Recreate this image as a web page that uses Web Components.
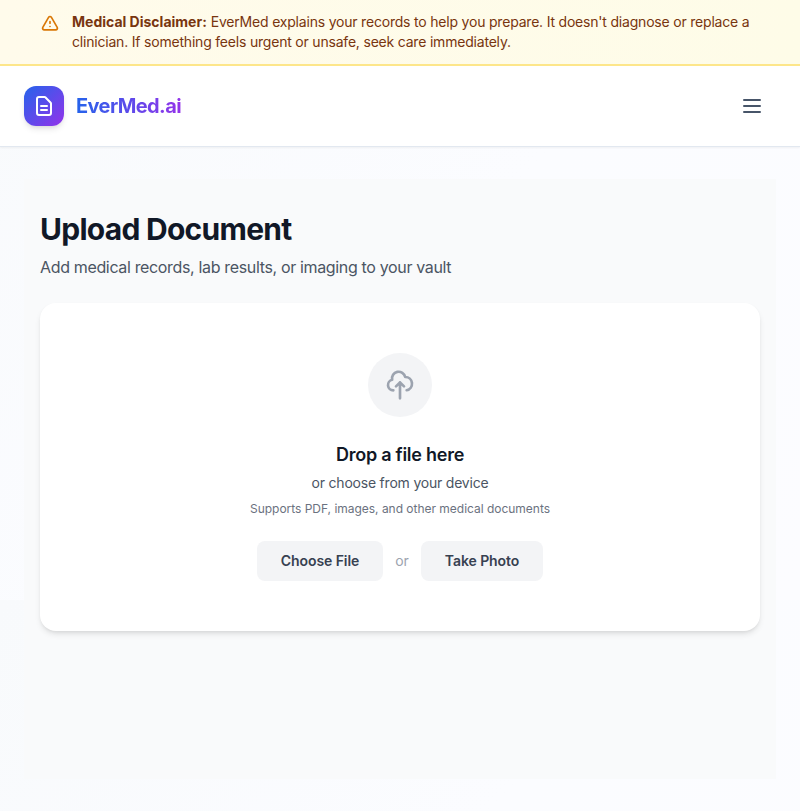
<!DOCTYPE html>
<html lang="en">
<head>
<meta charset="utf-8">
<title>EverMed.ai</title>
<style>
html { background: linear-gradient(135deg, #f8fafc 0%, #fbfcff 50%, #fcfcff 100%) 0 0 / 100% 600px; min-height: 100%; }
body { margin: 0; font-family: Inter, "Liberation Sans", sans-serif; color: #111827; overflow: hidden; }
</style>
</head>
<body>
<disclaimer-bar><strong>Medical Disclaimer:</strong> <span>EverMed explains your records to help you prepare. It doesn't diagnose or replace a clinician. If something feels urgent or unsafe, seek care immediately.</span></disclaimer-bar>
<site-header>EverMed.ai</site-header>
<upload-page>
  <span slot="title">Upload Document</span>
  <span slot="subtitle">Add medical records, lab results, or imaging to your vault</span>
  <drop-card>
    <span slot="heading">Drop a file here</span>
    <span slot="hint">or choose from your device</span>
    <span slot="formats">Supports PDF, images, and other medical documents</span>
    <soft-button slot="actions">Choose File</soft-button>
    <span slot="actions">or</span>
    <soft-button slot="actions">Take Photo</soft-button>
  </drop-card>
</upload-page>
<script>
const define = (name, html) => customElements.define(name, class extends HTMLElement {
  constructor() {
    super();
    this.attachShadow({ mode: 'open' }).innerHTML = html;
  }
});

define('disclaimer-bar', `
<style>
:host { display: flex; gap: 12px; box-sizing: border-box; height: 66px; padding: 12px 40px; background: linear-gradient(90deg, #fffbeb, #fefce8); border-bottom: 2px solid #fde68a; color: #78350f; font-size: 14px; line-height: 20px; }
svg { flex: none; width: 20px; height: 20px; margin-top: 2px; }
p { margin: 0; flex: 1; }
::slotted(strong) { font-weight: 700; }
::slotted(span) { letter-spacing: -.2px; }
</style>
<svg viewBox="0 0 24 24" fill="none" stroke="#d97706" stroke-width="2" stroke-linecap="round" stroke-linejoin="round"><path d="M12 9v2m0 4h.01m-6.938 4h13.856c1.54 0 2.502-1.667 1.732-3L13.732 4c-.77-1.333-2.694-1.333-3.464 0L3.34 16c-.77 1.333.192 3 1.732 3z"/></svg>
<p><slot></slot></p>`);

define('site-header', `
<style>
:host { display: flex; align-items: center; justify-content: space-between; padding: 16px 24px; background: #fff; border-bottom: 1px solid #e2e8f0; box-shadow: 0 1px 2px rgba(0,0,0,.05); }
.brand { display: flex; align-items: center; gap: 12px; }
.mark { display: grid; place-items: center; width: 40px; height: 40px; border-radius: 12px; background: linear-gradient(135deg, #2563eb, #9333ea); box-shadow: 0 4px 6px -1px rgba(0,0,0,.1), 0 2px 4px -2px rgba(0,0,0,.1); }
.mark svg { width: 24px; height: 24px; }
.name { font-size: 20px; line-height: 28px; font-weight: 700; letter-spacing: -.6px; background: linear-gradient(90deg, #2563eb, #9333ea); -webkit-background-clip: text; background-clip: text; color: transparent; }
button { all: unset; display: flex; padding: 12px; height: 24px; }
</style>
<div class="brand">
<div class="mark"><svg viewBox="0 0 24 24" fill="none" stroke="#fff" stroke-width="2" stroke-linecap="round" stroke-linejoin="round"><path d="M9 12h6m-6 4h6m2 5H7a2 2 0 01-2-2V5a2 2 0 012-2h5.586a1 1 0 01.707.293l5.414 5.414a1 1 0 01.293.707V19a2 2 0 01-2 2z"/></svg></div>
<span class="name"><slot></slot></span>
</div>
<button aria-label="Open menu"><svg width="24" height="24" viewBox="0 0 24 24" fill="none" stroke="#475569" stroke-width="2" stroke-linecap="round"><path d="M4 6h16M4 12h16M4 18h16"/></svg></button>`);

define('upload-page', `
<style>
:host { display: block; padding: 32px 24px; }
main { box-sizing: border-box; min-height: 600px; padding: 32px 16px; background: #f9fafb; }
h1 { margin: 0 0 8px; font-size: 30px; line-height: 36px; font-weight: 700; color: #111827; letter-spacing: -.73px; }
p { margin: 0 0 24px; font-size: 16px; line-height: 24px; color: #4b5563; letter-spacing: -.345px; }
</style>
<main><h1><slot name="title"></slot></h1><p><slot name="subtitle"></slot></p><slot></slot></main>`);

define('drop-card', `
<style>
:host { display: flex; flex-direction: column; align-items: center; box-sizing: border-box; height: 328px; padding: 50px; border-radius: 16px; background: #fff; box-shadow: 0 4px 6px -1px rgba(0,0,0,.1), 0 2px 4px -2px rgba(0,0,0,.1); text-align: center; }
.disc { display: grid; place-items: center; width: 64px; height: 64px; border-radius: 50%; background: #f3f4f6; margin-bottom: 24px; }
h3 { margin: 0 0 4px; font-size: 18px; line-height: 28px; font-weight: 600; color: #111827; letter-spacing: -.25px; }
.hint { margin: 0 0 8px; font-size: 14px; line-height: 20px; color: #4b5563; letter-spacing: -.21px; }
.formats { margin: 0; font-size: 12px; line-height: 16px; color: #6b7280; letter-spacing: -.02px; }
.actions { display: flex; align-items: center; gap: 12px; margin-top: 24px; font-size: 14px; line-height: 20px; color: #9ca3af; }
</style>
<div class="disc"><svg width="32" height="32" viewBox="0 0 24 24" fill="none" stroke="#9ca3af" stroke-width="2" stroke-linecap="round" stroke-linejoin="round"><path d="M7 16a4 4 0 01-.88-7.903A5 5 0 1115.9 6L16 6a5 5 0 011 9.9M15 13l-3-3m0 0l-3 3m3-3v12"/></svg></div>
<h3><slot name="heading"></slot></h3>
<p class="hint"><slot name="hint"></slot></p>
<p class="formats"><slot name="formats"></slot></p>
<div class="actions"><slot name="actions"></slot></div>`);

define('soft-button', `
<style>
:host { display: block; }
button { all: unset; display: block; padding: 10px 24px; border-radius: 8px; background: #f3f4f6; color: #374151; font-size: 14px; line-height: 20px; font-weight: 600; letter-spacing: -.08px; }
</style>
<button><slot></slot></button>`);
</script>
</body>
</html>
